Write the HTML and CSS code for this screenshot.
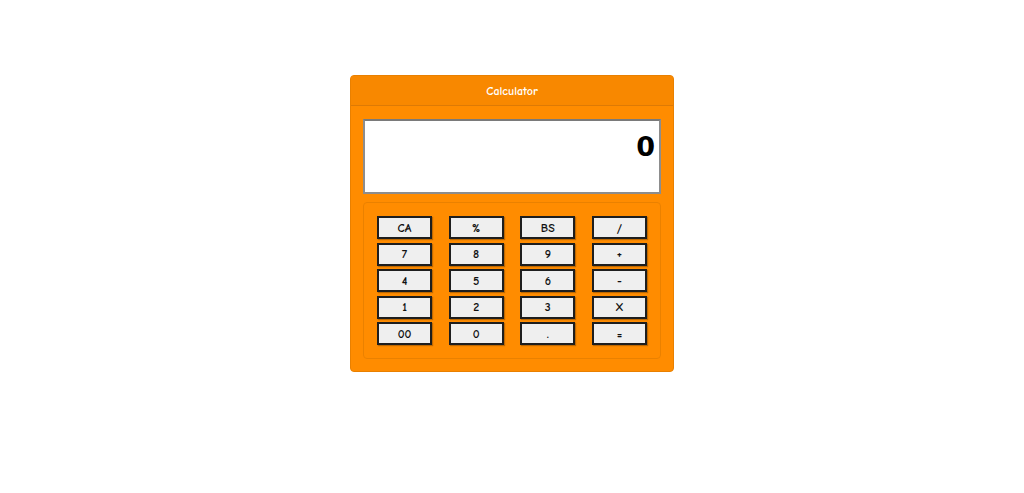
FILE: index.html
```html
<!DOCTYPE html>
<html>
<head>
<meta charset="utf-8">
<title>Calculator</title>
<link rel="stylesheet" href="styles.css">
</head>
<body>
<div class="page">
  <div class="calc">
    <div class="calc-head">Calculator</div>
    <div class="calc-body">
      <div class="display"><span class="value">0</span></div>
      <div class="keys">
        <button class="key">CA</button>
        <button class="key">%</button>
        <button class="key">BS</button>
        <button class="key">/</button>
        <button class="key">7</button>
        <button class="key">8</button>
        <button class="key">9</button>
        <button class="key">+</button>
        <button class="key">4</button>
        <button class="key">5</button>
        <button class="key">6</button>
        <button class="key">-</button>
        <button class="key">1</button>
        <button class="key">2</button>
        <button class="key">3</button>
        <button class="key">X</button>
        <button class="key">00</button>
        <button class="key">0</button>
        <button class="key">.</button>
        <button class="key">=</button>
      </div>
    </div>
  </div>
</div>
</body>
</html>
```
FILE: styles.css
```css
html, body {
  margin: 0;
  padding: 0;
  background: #ffffff;
}

.page {
  display: flex;
  justify-content: center;
  padding-top: 75px;
  font-family: "Comic Sans MS", "Comic Neue", "Liberation Sans", sans-serif;
}

.calc {
  width: 322px;
  background: #ff8c00;
  border: 1px solid #e98000;
  border-radius: 4px;
  overflow: hidden;
}

.calc-head {
  height: 29px;
  line-height: 31px;
  background: #f88800;
  border-bottom: 1px solid #dd7a05;
  color: #ffffff;
  font-size: 12px;
  font-weight: bold;
  text-align: center;
}

.calc-body {
  padding: 13px 12px 12px;
  display: flex;
  flex-direction: column;
  gap: 8px;
}

.display {
  box-sizing: border-box;
  height: 75px;
  background: #ffffff;
  border: 2px solid #8d8d8d;
  border-top-color: #7a7a7a;
  display: flex;
  justify-content: flex-end;
  align-items: flex-start;
  padding: 9px 4px 0 0;
}

.value {
  font-family: "DejaVu Sans", "Liberation Sans", sans-serif;
  font-weight: bold;
  font-size: 27px;
  color: #000000;
  line-height: 34px;
}

.keys {
  border: 1px solid #ea8100;
  border-radius: 4px;
  padding: 13px 12px 13px 13px;
  display: grid;
  grid-template-columns: repeat(4, 55px);
  grid-auto-rows: 23px;
  column-gap: 16.67px;
  row-gap: 3.5px;
}

.key {
  margin: 0;
  padding: 0;
  width: 55px;
  height: 23px;
  background: #efefef;
  border: 2px solid #1e1e1e;
  border-radius: 0;
  font-family: "Comic Sans MS", "Comic Neue", "Liberation Sans", sans-serif;
  font-size: 12px;
  font-weight: bold;
  color: #111111;
  box-shadow: 1px 1px 1px rgba(0, 0, 0, 0.25);
  cursor: pointer;
}
```
